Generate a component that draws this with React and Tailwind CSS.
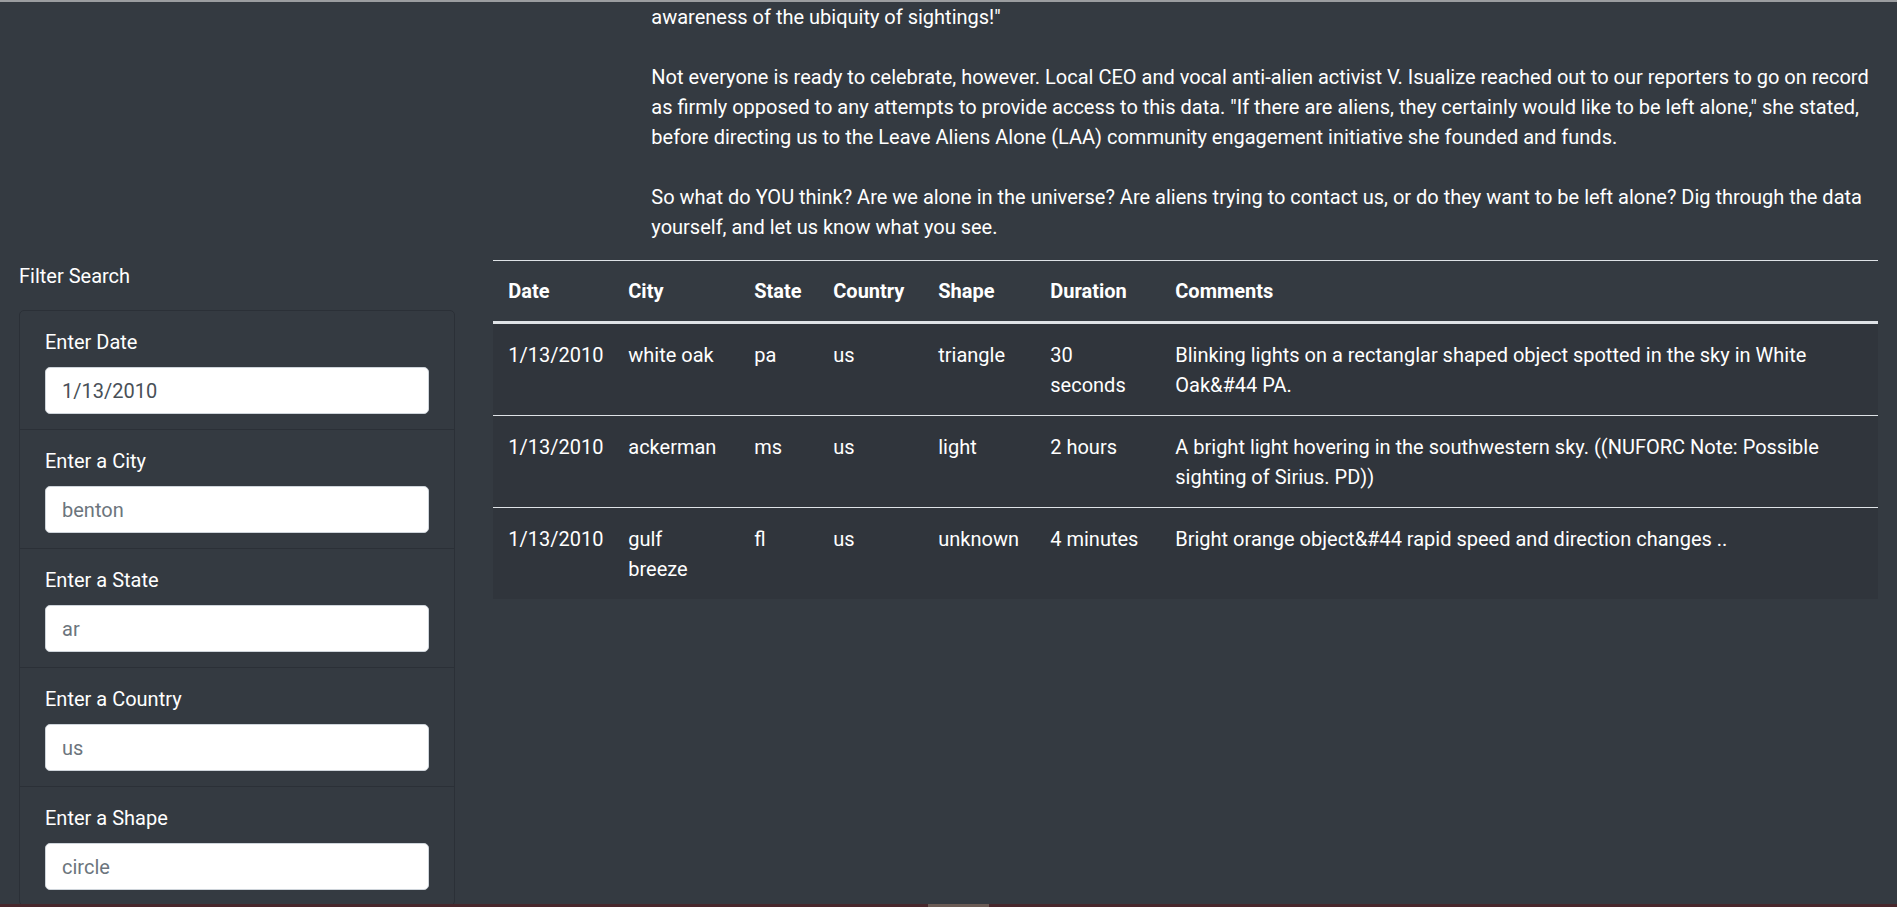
import React from 'react';

const storyLines = [
    'awareness of the ubiquity of sightings!"',
    null,
    'Not everyone is ready to celebrate, however. Local CEO and vocal anti-alien activist V. Isualize reached out to our reporters to go on record',
    'as firmly opposed to any attempts to provide access to this data. "If there are aliens, they certainly would like to be left alone," she stated,',
    'before directing us to the Leave Aliens Alone (LAA) community engagement initiative she founded and funds.',
    null,
    'So what do YOU think? Are we alone in the universe? Are aliens trying to contact us, or do they want to be left alone? Dig through the data',
    'yourself, and let us know what you see.',
];

const filters = [
    { id: 'datetime', label: 'Enter Date', value: '1/13/2010' },
    { id: 'city', label: 'Enter a City', placeholder: 'benton' },
    { id: 'state', label: 'Enter a State', placeholder: 'ar' },
    { id: 'country', label: 'Enter a Country', placeholder: 'us' },
    { id: 'shape', label: 'Enter a Shape', placeholder: 'circle' },
];

const sightings = [
    {
        date: '1/13/2010', city: 'white oak', state: 'pa', country: 'us', shape: 'triangle',
        duration: '30 seconds',
        comments: 'Blinking lights on a rectanglar shaped object spotted in the sky in White Oak&#44 PA.',
    },
    {
        date: '1/13/2010', city: 'ackerman', state: 'ms', country: 'us', shape: 'light',
        duration: '2 hours',
        comments: 'A bright light hovering in the southwestern sky. ((NUFORC Note: Possible sighting of Sirius. PD))',
    },
    {
        date: '1/13/2010', city: 'gulf breeze', state: 'fl', country: 'us', shape: 'unknown',
        duration: '4 minutes',
        comments: 'Bright orange object&#44 rapid speed and direction changes ..',
    },
];

const headers = ['Date', 'City', 'State', 'Country', 'Shape', 'Duration', 'Comments'];

const FilterItem = ({ id, label, value, placeholder, first }) => (
    <li className={`px-[25px] pt-[16px] pb-[15px] ${first ? '' : 'border-t border-[#2b3037]'}`}>
        <label htmlFor={id} className="block mb-[10px] text-[20px] leading-[30px]">{label}</label>
        <input
            id={id}
            type="text"
            defaultValue={value}
            placeholder={placeholder}
            className="block w-full h-[47px] px-[16px] rounded-[5px] border border-[#ced4da] bg-white text-[20px] text-[#495057] placeholder:text-[#6c757d] outline-none"
        />
    </li>
);

const App = () => {
    return (
        <div
            className="h-[907px] w-full overflow-hidden flex flex-col bg-[#343a41] text-white"
            style={{ fontFamily: '"Segoe UI", Roboto, "Noto Sans", sans-serif' }}
        >
            <div className="h-[2px] shrink-0 bg-[#9b9da0]" />

            <div className="flex-1 overflow-hidden">
                <div className="grid grid-cols-12">
                    <div className="col-span-8 col-start-5 px-[19px]">
                        <p className="mb-[18px] text-[20px] leading-[30px]">
                            {storyLines.map((line, i) =>
                                line ? (
                                    <span key={i} className="block whitespace-nowrap">{line}</span>
                                ) : (
                                    <span key={i} className="block h-[30px]" />
                                )
                            )}
                        </p>
                    </div>

                    <div className="col-span-3 px-[19px]">
                        <p className="mb-[19px] pt-[1px] text-[20px] leading-[30px]">Filter Search</p>
                        <ul className="border border-[#2b3037] rounded-[5px]">
                            {filters.map((f, i) => (
                                <FilterItem key={f.id} {...f} first={i === 0} />
                            ))}
                        </ul>
                    </div>

                    <div className="col-span-9 px-[19px]">
                        <table className="w-full table-fixed border-t border-[#dee2e6] text-[20px] leading-[30px]">
                            <colgroup>
                                <col className="w-[120px]" />
                                <col className="w-[126px]" />
                                <col className="w-[79px]" />
                                <col className="w-[105px]" />
                                <col className="w-[112px]" />
                                <col className="w-[125px]" />
                                <col />
                            </colgroup>
                            <thead>
                                <tr className="border-b-[3px] border-[#dee2e6]">
                                    {headers.map((h) => (
                                        <th key={h} className="p-[15px] text-left font-bold align-bottom">{h}</th>
                                    ))}
                                </tr>
                            </thead>
                            <tbody className="bg-[#30353c]">
                                {sightings.map((s, i) => (
                                    <tr key={i} className={i === 0 ? '' : 'border-t border-[#dee2e6]'}>
                                        <td className="pt-[16px] pb-[15px] px-[15px] align-top">{s.date}</td>
                                        <td className="pt-[16px] pb-[15px] px-[15px] align-top">{s.city}</td>
                                        <td className="pt-[16px] pb-[15px] px-[15px] align-top">{s.state}</td>
                                        <td className="pt-[16px] pb-[15px] px-[15px] align-top">{s.country}</td>
                                        <td className="pt-[16px] pb-[15px] px-[15px] align-top">{s.shape}</td>
                                        <td className="pt-[16px] pb-[15px] px-[15px] align-top">{s.duration}</td>
                                        <td className="pt-[16px] pb-[15px] px-[15px] align-top">{s.comments}</td>
                                    </tr>
                                ))}
                            </tbody>
                        </table>
                    </div>
                </div>
            </div>

            <div className="h-[3px] shrink-0 flex bg-[#47272c]">
                <div className="ml-[928px] w-[61px] bg-[#6b5b55]" />
            </div>
        </div>
    );
};

export default App;
